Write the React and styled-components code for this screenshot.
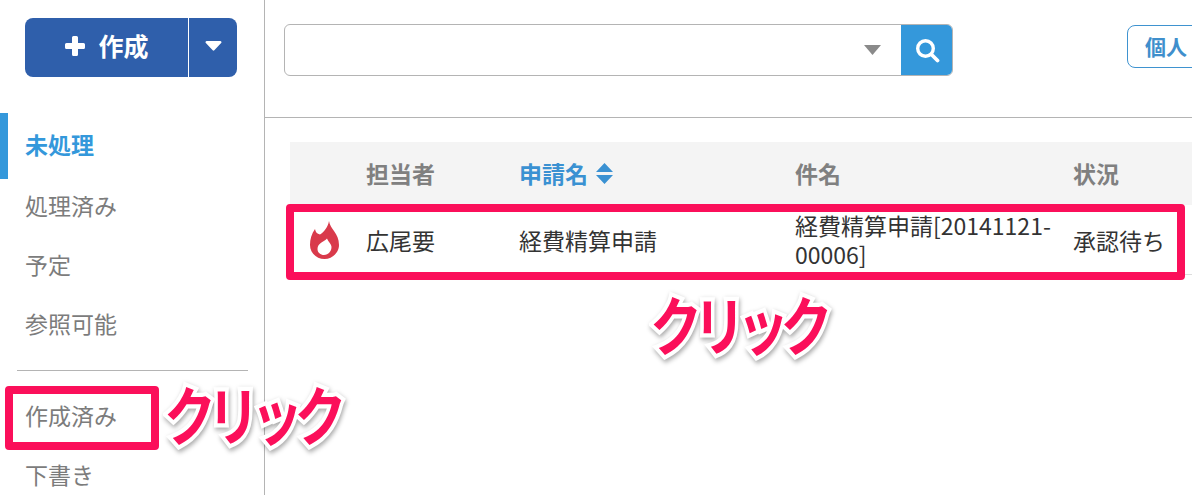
import React from "react";
import styled, { createGlobalStyle } from "styled-components";

const Global = createGlobalStyle`
  html, body { margin: 0; padding: 0; background: #fff; }
  body { font-family: "Noto Sans CJK JP", "Noto Sans", sans-serif; overflow: hidden; }
`;
const Page = styled.div`
  position: relative; display: flex; width: 1192px; height: 495px; overflow: hidden; background: #fff;
`;
const Sidebar = styled.aside`
  flex: 0 0 265px; box-sizing: border-box; height: 495px; border-right: 1px solid #b4b4b4; padding-top: 18px;
`;
const CreateGroup = styled.div`
  display: flex; width: 212px; height: 59px; margin-left: 25px; border-radius: 8px; overflow: hidden;
  background: #2f5fab; color: #fff;
`;
const CreateMain = styled.div`
  flex: 0 0 163px; display: flex; align-items: center; justify-content: center; gap: 12px;
  border-right: 1px solid #fff; font-size: 25px; font-weight: 700; line-height: 1; padding: 0 0 4px 0;
`;
const CreateCaret = styled.div`flex: 1; display: flex; align-items: center; justify-content: center; padding-bottom: 4px;`;
const Nav = styled.nav`display: flex; flex-direction: column; margin-top: 36px;`;
const NavItem = styled.div`
  box-sizing: border-box; height: ${p => (p.$active ? 66 : 59)}px; display: flex; align-items: center;
  margin-bottom: ${p => (p.$active ? -1 : 0)}px; padding-bottom: 4px;
  padding-left: ${p => (p.$active ? 17 : 25)}px; font-size: 23px; line-height: 1;
  color: ${p => (p.$active ? "#3498db" : "#7c7c7c")}; font-weight: ${p => (p.$active ? 700 : 400)};
  border-left: ${p => (p.$active ? "8px solid #3498db" : "none")};
`;
const NavRule = styled.hr`border: 0; border-top: 1px solid #b4b4b4; margin: 15px 16px 17px 17px;`;
const Main = styled.main`flex: 1; min-width: 0; overflow: hidden;`;
const TopBar = styled.div`
  box-sizing: border-box; height: 118px; border-bottom: 1px solid #b4b4b4; display: flex; align-items: flex-start;
  padding: 24px 0 0 19px;
`;
const Search = styled.div`
  box-sizing: border-box; flex: 0 0 669px; height: 52px; display: flex; border: 1px solid #b4b4b4; border-radius: 6px; overflow: hidden;
`;
const SearchInput = styled.div`flex: 1; display: flex; align-items: center; justify-content: flex-end; padding-right: 20px;`;
const SearchBtn = styled.div`
  flex: 0 0 52px; margin: -1px -1px -1px 0; background: #3498db; display: flex; align-items: center; justify-content: center;
`;
const Personal = styled.div`
  box-sizing: border-box; flex: 0 0 120px; height: 43px; margin: 1px 0 0 174px; border: 1px solid #3f93d0; border-radius: 8px;
  padding-left: 17px; display: flex; align-items: center; color: #3f8fcc; font-size: 21px; font-weight: 700; line-height: 1;
`;
const Table = styled.div`margin: 24px 0 0 25px; width: 902px;`;
const Cols = styled.div`display: grid; grid-template-columns: 76px 153px 276px 278px 1fr; align-items: center;`;
const Head = styled(Cols)`height: 63px; background: #f4f4f4; font-size: 23px; font-weight: 700; color: #808080; line-height: 1;`;
const Row = styled(Cols)`height: 70px; box-sizing: border-box; padding-top: 1px; border-bottom: 1px solid #ddd; font-size: 23px; color: #333; line-height: 29px;`;
const IconCell = styled.div`padding-left: 20px; display: flex; align-items: center;`;
const Sortable = styled.div`color: #3a91d2; display: flex; align-items: center; gap: 8px;`;
const Subject = styled.div`width: 265px; word-break: break-word;`;
const Frame = styled.div`
  position: absolute; box-sizing: border-box; border: 8px solid #fb0f5a; border-radius: 4px; pointer-events: none;
  left: ${p => p.$x}px; top: ${p => p.$y}px; width: ${p => p.$w}px; height: ${p => p.$h}px;
`;
const Callout = styled.div`
  position: absolute; left: ${p => p.$x}px; top: ${p => p.$y}px; white-space: nowrap;
  font-size: 52px; font-weight: 700; line-height: 1; letter-spacing: -8.5px; color: #fb0f5a;
  -webkit-text-stroke: 7px #fff; paint-order: stroke fill; filter: drop-shadow(1px 2px 2px rgba(0,0,0,.35));
  transform: scaleY(1.22);
`;

export default function App() {
  return (
    <Page>
      <Global />
      <Sidebar>
        <CreateGroup>
          <CreateMain>
            <svg width="22" height="22" viewBox="0 0 22 22"><path d="M8 2.5a1.5 1.5 0 0 1 1.5-1.5h3A1.5 1.5 0 0 1 14 2.500V8h5.500A1.500 1.500 0 0 1 21 9.500v3a1.500 1.500 0 0 1-1.500 1.500H14v5.500a1.500 1.500 0 0 1-1.500 1.500h-3A1.500 1.500 0 0 1 8 19.500V14H2.500A1.500 1.500 0 0 1 1 12.500v-3A1.500 1.500 0 0 1 2.500 8H8z" fill="#fff"/></svg>
            <span>作成</span>
          </CreateMain>
          <CreateCaret>
            <svg width="17" height="10" viewBox="0 0 18 11"><path d="M1.500 0h15a1.300 1.300 0 0 1 .9 2.200L9.900 10.200a1.300 1.300 0 0 1-1.800 0L.6 2.200A1.300 1.300 0 0 1 1.500 0z" fill="#fff"/></svg>
          </CreateCaret>
        </CreateGroup>
        <Nav>
          <NavItem $active>未処理</NavItem>
          <NavItem>処理済み</NavItem>
          <NavItem>予定</NavItem>
          <NavItem>参照可能</NavItem>
          <NavRule />
          <NavItem>作成済み</NavItem>
          <NavItem>下書き</NavItem>
        </Nav>
      </Sidebar>
      <Main>
        <TopBar>
          <Search>
            <SearchInput>
              <svg width="17" height="10" viewBox="0 0 17 10"><path d="M0 0h17L8.500 10z" fill="#8a8a8a"/></svg>
            </SearchInput>
            <SearchBtn>
              <svg width="25" height="25" viewBox="0 0 25 25" fill="none" stroke="#fff"><circle cx="10.500" cy="10.500" r="7.800" strokeWidth="3.400"/><path d="M16.500 16.500l6 6" strokeWidth="3.800" strokeLinecap="round"/></svg>
            </SearchBtn>
          </Search>
          <Personal>個人</Personal>
        </TopBar>
        <Table>
          <Head>
            <div />
            <div>担当者</div>
            <Sortable>
              申請名
              <svg width="17" height="21" viewBox="0 0 17 21"><path d="M8.500 0L17 9H0zM8.500 21L0 12h17z" fill="#3a91d2"/></svg>
            </Sortable>
            <div>件名</div>
            <div>状況</div>
          </Head>
          <Row>
            <IconCell>
              <svg width="29" height="38" viewBox="0 0 29 38">
                <path fillRule="evenodd" fill="#d93a4b" d="M19 0C20 8 29 12 29 24C29 32 22 38 14.500 38C6.500 38 0 32 0 24C0 18 1.500 13 5 8C5.500 11 7 13 10 13.500C14 11 18 6 19 0ZM17 17.500C14 21 7.500 22 7.500 28C7.500 31.500 10.500 34 14 34C18.500 34 21.500 30 21.500 26C21.500 23 18.500 21 17 17.500Z"/>
              </svg>
            </IconCell>
            <div>広尾要</div>
            <div>経費精算申請</div>
            <Subject>経費精算申請[20141121-00006]</Subject>
            <div>承認待ち</div>
          </Row>
        </Table>
      </Main>
      <Frame $x={286} $y={204} $w={899} $h={76} />
      <Frame $x={5} $y={386} $w={154} $h={64} />
      <Callout $x={650} $y={297}>クリック</Callout>
      <Callout $x={164} $y={387}>クリック</Callout>
    </Page>
  );
}
